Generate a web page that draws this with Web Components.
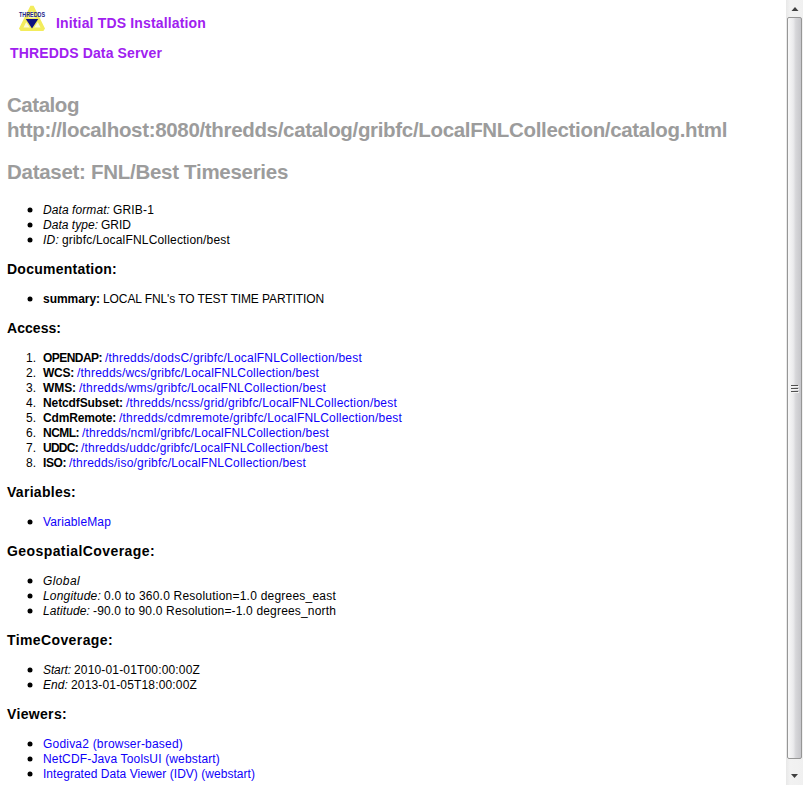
<!DOCTYPE html>
<html lang="en">
<head>
<meta charset="utf-8">
<title>THREDDS Catalog</title>
<style>
html, body { margin: 0; height: 785px; overflow: hidden; background: #fff; }
body { font-family: "Liberation Sans", Arial, sans-serif; font-size: 12px; line-height: 15px; color: #000; }
</style>
</head>
<body>
<tds-page>
  <tds-brand slot="brand"></tds-brand>
  <tds-title><tds-run w="72">Catalog</tds-run><br><tds-run w="720">http://localhost:8080/thredds/catalog/gribfc/LocalFNLCollection/catalog.html</tds-run></tds-title>
  <tds-title><tds-run w="281">Dataset: FNL/Best Timeseries</tds-run></tds-title>
  <tds-section>
    <tds-item><tds-run w="67" k="i">Data format:</tds-run><tds-run w="41">GRIB-1</tds-run></tds-item>
    <tds-item><tds-run w="55" k="i">Data type:</tds-run><tds-run w="30">GRID</tds-run></tds-item>
    <tds-item><tds-run w="16" k="i">ID:</tds-run><tds-run w="168">gribfc/LocalFNLCollection/best</tds-run></tds-item>
  </tds-section>
  <tds-section>
    <tds-run slot="head" w="110" k="h">Documentation:</tds-run>
    <tds-item><tds-run w="57" k="b">summary:</tds-run><tds-run w="221">LOCAL FNL's TO TEST TIME PARTITION</tds-run></tds-item>
  </tds-section>
  <tds-section>
    <tds-run slot="head" w="54" k="h">Access:</tds-run>
    <tds-item n="1."><tds-run w="59" k="b">OPENDAP:</tds-run><tds-run w="257" k="a">/thredds/dodsC/gribfc/LocalFNLCollection/best</tds-run></tds-item>
    <tds-item n="2."><tds-run w="31" k="b">WCS:</tds-run><tds-run w="242" k="a">/thredds/wcs/gribfc/LocalFNLCollection/best</tds-run></tds-item>
    <tds-item n="3."><tds-run w="33" k="b">WMS:</tds-run><tds-run w="247" k="a">/thredds/wms/gribfc/LocalFNLCollection/best</tds-run></tds-item>
    <tds-item n="4."><tds-run w="80" k="b">NetcdfSubset:</tds-run><tds-run w="271" k="a">/thredds/ncss/grid/gribfc/LocalFNLCollection/best</tds-run></tds-item>
    <tds-item n="5."><tds-run w="73" k="b">CdmRemote:</tds-run><tds-run w="283" k="a">/thredds/cdmremote/gribfc/LocalFNLCollection/best</tds-run></tds-item>
    <tds-item n="6."><tds-run w="36" k="b">NCML:</tds-run><tds-run w="247" k="a">/thredds/ncml/gribfc/LocalFNLCollection/best</tds-run></tds-item>
    <tds-item n="7."><tds-run w="35" k="b">UDDC:</tds-run><tds-run w="247" k="a">/thredds/uddc/gribfc/LocalFNLCollection/best</tds-run></tds-item>
    <tds-item n="8."><tds-run w="23" k="b">ISO:</tds-run><tds-run w="237" k="a">/thredds/iso/gribfc/LocalFNLCollection/best</tds-run></tds-item>
  </tds-section>
  <tds-section>
    <tds-run slot="head" w="69" k="h">Variables:</tds-run>
    <tds-item><tds-run w="68" k="a">VariableMap</tds-run></tds-item>
  </tds-section>
  <tds-section>
    <tds-run slot="head" w="148" k="h">GeospatialCoverage:</tds-run>
    <tds-item><tds-run w="37" k="i">Global</tds-run></tds-item>
    <tds-item><tds-run w="58" k="i">Longitude:</tds-run><tds-run w="232">0.0 to 360.0 Resolution=1.0 degrees_east</tds-run></tds-item>
    <tds-item><tds-run w="47" k="i">Latitude:</tds-run><tds-run w="243">-90.0 to 90.0 Resolution=-1.0 degrees_north</tds-run></tds-item>
  </tds-section>
  <tds-section>
    <tds-run slot="head" w="106" k="h">TimeCoverage:</tds-run>
    <tds-item><tds-run w="28" k="i">Start:</tds-run><tds-run w="126">2010-01-01T00:00:00Z</tds-run></tds-item>
    <tds-item><tds-run w="25" k="i">End:</tds-run><tds-run w="126">2013-01-05T18:00:00Z</tds-run></tds-item>
  </tds-section>
  <tds-section>
    <tds-run slot="head" w="60" k="h">Viewers:</tds-run>
    <tds-item><tds-run w="140" k="a">Godiva2 (browser-based)</tds-run></tds-item>
    <tds-item><tds-run w="177" k="a">NetCDF-Java ToolsUI (webstart)</tds-run></tds-item>
    <tds-item><tds-run w="212" k="a">Integrated Data Viewer (IDV) (webstart)</tds-run></tds-item>
  </tds-section>
  <tds-scrollbar slot="scroll"></tds-scrollbar>
</tds-page>
<script>
const define = (name, html, setup) => customElements.define(name, class extends HTMLElement {
  connectedCallback() {
    if (this.shadowRoot) return;
    this.attachShadow({ mode: 'open' }).innerHTML = html;
    if (setup) setup(this, this.shadowRoot);
  }
});

define('tds-page', `<style>
  :host { display: grid; grid-template-columns: 1fr 17px; height: 785px; }
  main { padding-left: 7px; overflow: hidden; }
  </style><main><slot name="brand"></slot><slot></slot></main><slot name="scroll"></slot>`);

define('tds-title', `<style>
  :host { display: block; font-size: 20.5px; font-weight: bold; line-height: 25px; color: #9c9c9c; margin-bottom: 17px; }
  </style><slot></slot>`);

define('tds-section', `<style>
  :host { display: block; }
  h3 { margin: 0; padding: 15px 0 12px; line-height: 17px; }
  h3[hidden] { display: none; }
  </style><h3><slot name="head"></slot></h3><slot></slot>`, (el, root) => {
  root.querySelector('h3').hidden = !el.querySelector('[slot=head]');
});

define('tds-item', `<style>
  :host { display: flex; height: 15px; line-height: 19px; }
  .mark { width: 29px; margin-right: 7px; text-align: right; flex: none; }
  .dot { width: 6px; height: 6px; margin: 6px 10px 0 20px; }
  .body { display: flex; gap: 3px; white-space: nowrap; }
  </style><svg class="dot" viewBox="0 0 6 6"><circle cx="3" cy="3" r="2.5"/></svg><span class="mark"></span><span class="body"><slot></slot></span>`, (el, root) => {
  const n = el.getAttribute('n');
  if (n) { root.querySelector('.dot').remove(); root.querySelector('.mark').textContent = n; }
  else root.querySelector('.mark').remove();
});

// A run of text tracked out or in to fill the width in its "w" attribute.
define('tds-run', `<style>
  :host { display: inline-block; white-space: nowrap; }
  :host([k=i]) { font-style: italic; }
  :host([k=b]) { font-weight: bold; }
  :host([k=h]) { font-weight: bold; font-size: 14px; }
  a { color: #1000fa; text-decoration: none; }
  </style><span><slot></slot></span>`, (el, root) => {
  const t = root.querySelector('span');
  if (el.getAttribute('k') === 'a') {
    const a = document.createElement('a');
    a.href = '#'; t.replaceWith(a); a.append(t);
  }
});

define('tds-brand', `<style>
  :host { display: block; height: 92px; font-weight: bold; font-size: 14px; line-height: 17px; color: #a020f0; }
  .top { display: flex; height: 45px; }
  svg { width: 32px; height: 30px; margin: 3px 9px 0 9px; flex: none; overflow: visible; }
  .top tds-run { margin: 15px 0 0 -1px; }
  .sub { padding-left: 3px; }
  </style>
  <div class="top"><svg viewBox="0 0 32 30"><path d="M16 3.6 4.6 26.2h22.8z" fill="#fdfbd8" stroke="#f3ec5c" stroke-width="3.6" stroke-linejoin="bevel"/><path d="M9.8 16h12.4L16 25.5z" fill="#101080" stroke="#f3ec5c" stroke-width="2.6" paint-order="stroke"/><text x="16" y="14" text-anchor="middle" textLength="26" lengthAdjust="spacingAndGlyphs" font-size="6.5" fill="#24248c">THREDDS</text></svg><tds-run w="150">Initial TDS Installation</tds-run></div>
  <div class="sub"><tds-run w="152">THREDDS Data Server</tds-run></div>`);

define('tds-scrollbar', `<style>
  :host { display: flex; flex-direction: column; align-items: center; width: 17px; height: 785px; background: linear-gradient(90deg,#e8e8e8,#f2f2f2 25%,#f0f0f0); }
  .cap { height: 17px; width: 17px; flex: none; }
  .thumb { box-sizing: border-box; width: 15px; height: 742px; border: 1px solid #969696; border-radius: 2px; background: linear-gradient(90deg,#f8f8f8,#ebebed 40%,#d6d6d9 60%,#c6c6ca); display: grid; place-items: center; }
  svg { display: block; }
  .grip { width: 8px; height: 9px; }
  </style>
  <svg class="cap" viewBox="0 0 17 17"><path d="M5.5 11 9 7l3.5 4z" fill="#404040"/></svg>
  <div class="thumb"><svg class="grip" viewBox="0 0 8 9"><path d="M0 1.5h7M0 4.5h7M0 7.5h7" stroke="#505050"/><path d="M1 2.5h7M1 5.5h7M1 8.5h7" stroke="#f4f4f4"/></svg></div>
  <svg class="cap" style="margin-top:8px" viewBox="0 0 17 17"><path d="M5 7h7l-3.5 4z" fill="#404040"/></svg>`);

const fit = root => {
  root.querySelectorAll('*').forEach(el => {
    if (el.shadowRoot) fit(el.shadowRoot);
    if (el.localName !== 'tds-run') return;
    const w = +el.getAttribute('w');
    el.style.letterSpacing = (w - el.getBoundingClientRect().width) / el.textContent.length + 'px';
  });
};
fit(document);
</script>
</body>
</html>
